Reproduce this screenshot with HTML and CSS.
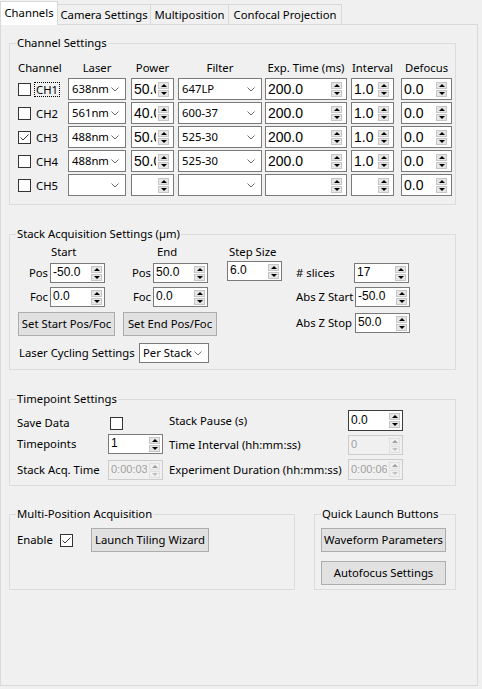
FILE: index.html
```html
<!DOCTYPE html>
<html>
<head>
<meta charset="utf-8">
<link rel="stylesheet" href="styles.css">
</head>
<body>
<div class="tabbar">
  <div class="tab active t1">Channels</div>
  <div class="tab t2">Camera Settings</div>
  <div class="tab t3">Multiposition</div>
  <div class="tab t4">Confocal Projection</div>
</div>
<div class="pane">
  <fieldset class="group g-channels">
    <legend>Channel Settings</legend>
    <div class="chgrid">
      <div class="hd hd-left">Channel</div>
      <div class="hd c-laser">Laser</div>
      <div class="hd c-power">Power</div>
      <div class="hd c-filter">Filter</div>
      <div class="hd c-exp">Exp. Time (ms)</div>
      <div class="hd c-int">Interval</div>
      <div class="hd c-def">Defocus</div>

      <div class="chk-cell"><span class="cb"></span><span class="chlabel focus">CH1</span></div>
      <div class="combo c-laser"><span class="ctext">638nm</span><svg class="chev" width="8" height="5" viewBox="0 0 8 5"><path d="M0.5 0.5L4 4L7.5 0.5" fill="none" stroke="#707070"/></svg></div>
      <div class="spin big c-power"><span class="val">50.0</span><span class="arr"><i class="up"></i><i class="dn"></i></span></div>
      <div class="combo c-filter"><span class="ctext">647LP</span><svg class="chev" width="8" height="5" viewBox="0 0 8 5"><path d="M0.5 0.5L4 4L7.5 0.5" fill="none" stroke="#707070"/></svg></div>
      <div class="spin big c-exp"><span class="val">200.0</span><span class="arr"><i class="up"></i><i class="dn"></i></span></div>
      <div class="spin big c-int"><span class="val">1.0</span><span class="arr"><i class="up"></i><i class="dn"></i></span></div>
      <div class="spin big c-def"><span class="val">0.0</span><span class="arr"><i class="up"></i><i class="dn"></i></span></div>

      <div class="chk-cell"><span class="cb"></span><span class="chlabel">CH2</span></div>
      <div class="combo c-laser"><span class="ctext">561nm</span><svg class="chev" width="8" height="5" viewBox="0 0 8 5"><path d="M0.5 0.5L4 4L7.5 0.5" fill="none" stroke="#707070"/></svg></div>
      <div class="spin big c-power"><span class="val">40.0</span><span class="arr"><i class="up"></i><i class="dn"></i></span></div>
      <div class="combo c-filter"><span class="ctext">600-37</span><svg class="chev" width="8" height="5" viewBox="0 0 8 5"><path d="M0.5 0.5L4 4L7.5 0.5" fill="none" stroke="#707070"/></svg></div>
      <div class="spin big c-exp"><span class="val">200.0</span><span class="arr"><i class="up"></i><i class="dn"></i></span></div>
      <div class="spin big c-int"><span class="val">1.0</span><span class="arr"><i class="up"></i><i class="dn"></i></span></div>
      <div class="spin big c-def"><span class="val">0.0</span><span class="arr"><i class="up"></i><i class="dn"></i></span></div>

      <div class="chk-cell"><span class="cb"><svg width="11" height="11" viewBox="0 0 11 11"><path d="M1.5 5.5L4 8L9.5 2.5" fill="none" stroke="#333"/></svg></span><span class="chlabel">CH3</span></div>
      <div class="combo c-laser"><span class="ctext">488nm</span><svg class="chev" width="8" height="5" viewBox="0 0 8 5"><path d="M0.5 0.5L4 4L7.5 0.5" fill="none" stroke="#707070"/></svg></div>
      <div class="spin big c-power"><span class="val">50.0</span><span class="arr"><i class="up"></i><i class="dn"></i></span></div>
      <div class="combo c-filter"><span class="ctext">525-30</span><svg class="chev" width="8" height="5" viewBox="0 0 8 5"><path d="M0.5 0.5L4 4L7.5 0.5" fill="none" stroke="#707070"/></svg></div>
      <div class="spin big c-exp"><span class="val">200.0</span><span class="arr"><i class="up"></i><i class="dn"></i></span></div>
      <div class="spin big c-int"><span class="val">1.0</span><span class="arr"><i class="up"></i><i class="dn"></i></span></div>
      <div class="spin big c-def"><span class="val">0.0</span><span class="arr"><i class="up"></i><i class="dn"></i></span></div>

      <div class="chk-cell"><span class="cb"></span><span class="chlabel">CH4</span></div>
      <div class="combo c-laser"><span class="ctext">488nm</span><svg class="chev" width="8" height="5" viewBox="0 0 8 5"><path d="M0.5 0.5L4 4L7.5 0.5" fill="none" stroke="#707070"/></svg></div>
      <div class="spin big c-power"><span class="val">50.0</span><span class="arr"><i class="up"></i><i class="dn"></i></span></div>
      <div class="combo c-filter"><span class="ctext">525-30</span><svg class="chev" width="8" height="5" viewBox="0 0 8 5"><path d="M0.5 0.5L4 4L7.5 0.5" fill="none" stroke="#707070"/></svg></div>
      <div class="spin big c-exp"><span class="val">200.0</span><span class="arr"><i class="up"></i><i class="dn"></i></span></div>
      <div class="spin big c-int"><span class="val">1.0</span><span class="arr"><i class="up"></i><i class="dn"></i></span></div>
      <div class="spin big c-def"><span class="val">0.0</span><span class="arr"><i class="up"></i><i class="dn"></i></span></div>

      <div class="chk-cell"><span class="cb"></span><span class="chlabel">CH5</span></div>
      <div class="combo c-laser"><span class="ctext"></span><svg class="chev" width="8" height="5" viewBox="0 0 8 5"><path d="M0.5 0.5L4 4L7.5 0.5" fill="none" stroke="#707070"/></svg></div>
      <div class="spin big c-power"><span class="val"></span><span class="arr"><i class="up"></i><i class="dn"></i></span></div>
      <div class="combo c-filter"><span class="ctext"></span><svg class="chev" width="8" height="5" viewBox="0 0 8 5"><path d="M0.5 0.5L4 4L7.5 0.5" fill="none" stroke="#707070"/></svg></div>
      <div class="spin big c-exp"><span class="val"></span><span class="arr"><i class="up"></i><i class="dn"></i></span></div>
      <div class="spin big c-int"><span class="val"></span><span class="arr"><i class="up"></i><i class="dn"></i></span></div>
      <div class="spin big c-def"><span class="val">0.0</span><span class="arr"><i class="up"></i><i class="dn"></i></span></div>
    </div>
  </fieldset>

  <fieldset class="group g-stack">
    <legend>Stack Acquisition Settings (µm)</legend>
    <div class="stack-top">
      <div class="sb sb1">
        <div class="colhead">Start</div>
        <div class="srow r-pos"><span class="lbl">Pos</span><div class="spin sm w55"><span class="val">-50.0</span><span class="arr"><i class="up"></i><i class="dn"></i></span></div></div>
        <div class="srow r-foc"><span class="lbl">Foc</span><div class="spin sm w55"><span class="val">0.0</span><span class="arr"><i class="up"></i><i class="dn"></i></span></div></div>
        <div class="btn b-start">Set Start Pos/Foc</div>
      </div>
      <div class="sb sb2">
        <div class="colhead">End</div>
        <div class="srow r-pos"><span class="lbl">Pos</span><div class="spin sm w55"><span class="val">50.0</span><span class="arr"><i class="up"></i><i class="dn"></i></span></div></div>
        <div class="srow r-foc"><span class="lbl">Foc</span><div class="spin sm w55"><span class="val">0.0</span><span class="arr"><i class="up"></i><i class="dn"></i></span></div></div>
        <div class="btn b-end">Set End Pos/Foc</div>
      </div>
      <div class="sb sb3">
        <div class="colhead">Step Size</div>
        <div class="spin sm w55 step"><span class="val">6.0</span><span class="arr"><i class="up"></i><i class="dn"></i></span></div>
      </div>
      <div class="sb sb4">
        <div class="zrow z1"><span class="zlbl">#&nbsp;slices</span><div class="spin sm w55"><span class="val">17</span><span class="arr"><i class="up"></i><i class="dn"></i></span></div></div>
        <div class="zrow z2"><span class="zlbl">Abs Z Start</span><div class="spin sm w55"><span class="val">-50.0</span><span class="arr"><i class="up"></i><i class="dn"></i></span></div></div>
        <div class="zrow z3"><span class="zlbl">Abs Z Stop</span><div class="spin sm w55"><span class="val">50.0</span><span class="arr"><i class="up"></i><i class="dn"></i></span></div></div>
      </div>
    </div>
    <div class="cycle-row">
      <span class="cycle-lbl">Laser Cycling Settings</span>
      <div class="combo sm-combo"><span class="ctext">Per Stack</span><svg class="chev" width="8" height="5" viewBox="0 0 8 5"><path d="M0.5 0.5L4 4L7.5 0.5" fill="none" stroke="#707070"/></svg></div>
    </div>
  </fieldset>

  <fieldset class="group g-time">
    <legend>Timepoint Settings</legend>
    <div class="tp">
      <div class="tcol tleft">
        <div class="trow l1"><span class="tlbl">Save Data</span><span class="cb cb-save"></span></div>
        <div class="trow l2"><span class="tlbl">Timepoints</span><div class="spin sm w55"><span class="val">1</span><span class="arr"><i class="up"></i><i class="dn"></i></span></div></div>
        <div class="trow l3"><span class="tlbl">Stack Acq. Time</span><div class="spin sm w55 dis"><span class="val">0:00:03</span><span class="arr"><i class="up"></i><i class="dn"></i></span></div></div>
      </div>
      <div class="tcol tright">
        <div class="trow q1"><span class="rlbl">Stack Pause (s)</span><div class="spin sm w55 focused"><span class="val">0.0</span><span class="arr"><i class="up"></i><i class="dn"></i></span></div></div>
        <div class="trow q2"><span class="rlbl">Time Interval (hh:mm:ss)</span><div class="spin sm w55 dis"><span class="val">0</span><span class="arr"><i class="up"></i><i class="dn"></i></span></div></div>
        <div class="trow q3"><span class="rlbl">Experiment Duration (hh:mm:ss)</span><div class="spin sm w55 dis"><span class="val">0:00:06</span><span class="arr"><i class="up"></i><i class="dn"></i></span></div></div>
      </div>
    </div>
  </fieldset>

  <div class="bottom-row">
    <fieldset class="group g-multi">
      <legend>Multi-Position Acquisition</legend>
      <div class="mrow">
        <span class="mlbl">Enable</span>
        <span class="cb cb-enable"><svg width="11" height="11" viewBox="0 0 11 11"><path d="M1.5 5.5L4 8L9.5 2.5" fill="none" stroke="#333"/></svg></span>
        <div class="btn b-tiling">Launch Tiling Wizard</div>
      </div>
    </fieldset>
    <fieldset class="group g-quick">
      <legend>Quick Launch Buttons</legend>
      <div class="btn b-quick">Waveform Parameters</div>
      <div class="btn b-quick b-auto">Autofocus Settings</div>
    </fieldset>
  </div>
</div>
</body>
</html>
```

FILE: styles.css
```css
* { box-sizing: border-box; }
html, body { margin: 0; padding: 0; }
body {
  width: 482px;
  height: 689px;
  overflow: hidden;
  background: #f0f0f0;
  color: #000;
  font-family: "Noto Sans", "Open Sans", sans-serif;
  font-size: 11.3px;
  line-height: 16px;
}

/* Tabs */
.tabbar { display: flex; align-items: flex-end; height: 24px; padding-top: 1px; }
.tab {
  height: 20px;
  display: flex; align-items: center; justify-content: center;
  background: #f0f0f0;
  border-top: 1px solid #d9d9d9;
  border-right: 1px solid #d9d9d9;
  padding-top: 1px;
  white-space: nowrap;
}
.tab.active {
  height: 24px;
  margin-bottom: -1px;
  background: #fff;
  border-left: 1px solid #d9d9d9;
  position: relative;
  z-index: 1;
  padding-top: 0;
  padding-bottom: 2px;
}
.t1 { width: 58px; }
.t2 { width: 93px; }
.t3 { width: 78px; }
.t4 { width: 113px; }

.pane {
  width: 478px;
  height: 662px;
  border: 1px solid #d9d9d9;
  padding: 0 0 0 8px;
}

/* Group boxes */
.group {
  margin: 0;
  border: 1px solid #dcdcdc;
  padding: 0 2px 0 8px;
  min-width: 0;
}
.group legend {
  padding: 0 1px;
  margin-left: -2px;
  line-height: 16px;
}
.g-channels { width: 447px; margin-top: 10px; padding-bottom: 8px; }

/* Channel grid */
.chgrid {
  display: grid;
  grid-template-columns: 50px 63px 47px 87px 86px 50px 51px;
  grid-template-rows: 17px repeat(5, 22px);
  row-gap: 2px;
  margin-top: 8px;
}
.hd { text-align: center; line-height: 17px; white-space: nowrap; }
.hd-left { text-align: left; }
.c-laser { width: 58px; }
.c-power { width: 43px; }
.c-filter { width: 84px; }
.c-exp { width: 82px; }
.c-int { width: 43px; }
.c-def { width: 51px; }

.chk-cell { display: flex; align-items: center; }
.cb {
  width: 13px; height: 13px;
  border: 1px solid #333;
  background: #fff;
  display: flex; align-items: center; justify-content: center;
  flex: none;
}
.chlabel { margin-left: 4px; padding: 0 1px; line-height: 13px; }
.focus { outline: 1px dotted #000; }

/* Combo */
.combo {
  display: flex; align-items: center;
  height: 22px;
  border: 1px solid #7a7a7a;
  background: #fff;
  padding: 0 6px 0 3px;
}
.ctext { flex: 1; white-space: nowrap; overflow: hidden; }
.chev { flex: none; }

/* Spin boxes */
.spin {
  display: flex; align-items: center;
  border: 1px solid #7a7a7a;
  background: #fff;
  font-family: "Liberation Sans", Arial, sans-serif;
}
.spin .val { flex: 1; min-width: 0; overflow: hidden; white-space: nowrap; padding-left: 2px; }
.big { height: 22px; font-size: 14px; }
.big .val { padding-left: 2px; }
.arr { display: flex; flex-direction: column; gap: 1px; margin: 0 4px 0 2px; flex: none; }
.arr i {
  display: flex; align-items: center; justify-content: center;
  width: 11px; height: 7px;
  background: #e6e6e6;
  border: 1px solid #c6c6c6;
}
.arr i::after { content: ""; border-left: 3px solid transparent; border-right: 3px solid transparent; }
.arr .up::after { border-bottom: 3px solid #000; }
.arr .dn::after { border-top: 3px solid #000; }

.sm { height: 20px; font-size: 12px; }
.sm .val { padding-left: 2px; line-height: 14px; padding-bottom: 2px; }
.sm .arr { margin-right: 2px; }
.sm .arr i { width: 11px; height: 7px; }
.w55 { width: 55px; }
.spin.dis { background: #f0f0f0; border-color: #cccccc; color: #a0a0a0; font-size: 11px; }
.spin.dis .arr i { background: #f0f0f0; border-color: #e0e0e0; }
.spin.dis .arr .up::after { border-bottom-color: #a0a0a0; }
.spin.dis .arr .dn::after { border-top-color: #c0c0c0; }
.spin.focused { border-color: #3c3c3c; }

/* Buttons */
.btn {
  display: flex; align-items: center; justify-content: center;
  height: 24px;
  border: 1px solid #adadad;
  background: #e1e1e1;
  white-space: nowrap;
}

/* Stack acquisition */
.g-stack { width: 447px; margin-top: 21px; padding-bottom: 6px; }
.stack-top { display: flex; margin-top: 2px; }
.colhead { height: 16px; line-height: 16px; white-space: nowrap; }
.sb1 { width: 97px; margin-right: 8px; }
.sb1 .colhead { padding-left: 33px; }
.sb2 { width: 94px; margin-right: 10px; }
.sb2 .colhead { padding-left: 34px; }
.sb3 { width: 55px; margin-right: 14px; }
.sb3 .colhead { padding-left: 2px; }
.sb4 { padding-top: 19px; }
.srow { display: flex; align-items: center; height: 20px; }
.r-pos { margin-top: 3px; }
.r-foc { margin-top: 4px; }
.sb1 .lbl { width: 30px; }
.sb2 .lbl { width: 28px; }
.lbl { text-align: right; margin-right: 2px; }
.b-start { margin-top: 5px; width: 97px; }
.b-end { margin-top: 5px; width: 94px; }
.step { margin-top: 1px; }
.zrow { display: flex; align-items: center; height: 20px; }
.zlbl { width: 59px; white-space: nowrap; }
.z1 .zlbl { width: 58px; }
.z2 { margin-top: 4px; }
.z3 { margin-top: 6px; }
.cycle-row { display: flex; align-items: center; margin-top: 7px; }
.cycle-lbl { width: 121px; padding-left: 1px; white-space: nowrap; }
.sm-combo { width: 70px; height: 20px; padding-left: 3px; }

/* Timepoints */
.g-time { width: 447px; margin-top: 21px; padding-bottom: 5px; }
.tp { display: flex; margin-top: 3px; }
.tcol { display: flex; flex-direction: column; }
.tleft { width: 151px; padding-top: 3px; }
.trow { display: flex; align-items: center; height: 20px; }
.tlbl { width: 90px; margin-left: -1px; white-space: nowrap; }
.cb-save { margin-left: 3px; }
.l2 { margin-top: 1px; }
.l3 { margin-top: 6px; }
.l2 .spin, .l3 .spin { margin-left: 1px; }
.rlbl { width: 179px; white-space: nowrap; }
.q1 { height: 21px; }
.q1 .spin { height: 21px; }
.q2 { margin-top: 4px; }
.q3 { margin-top: 4px; height: 21px; }
.q3 .spin { height: 21px; }

/* Bottom row */
.bottom-row { display: flex; align-items: stretch; margin-top: 20px; width: 447px; }
.g-multi { width: 286px; margin-right: 19px; }
.g-quick { width: 142px; padding: 0 4px 4px 6px; }
.g-quick legend { margin-left: 0; }
.mrow { display: flex; align-items: center; margin-top: 6px; }
.mlbl { width: 43px; margin-left: -1px; }
.cb-enable { margin-left: 0; }
.b-tiling { width: 118px; margin-left: 18px; }
.b-quick { width: 125px; margin-top: 6px; }
.b-auto { margin-top: 9px; }
```
